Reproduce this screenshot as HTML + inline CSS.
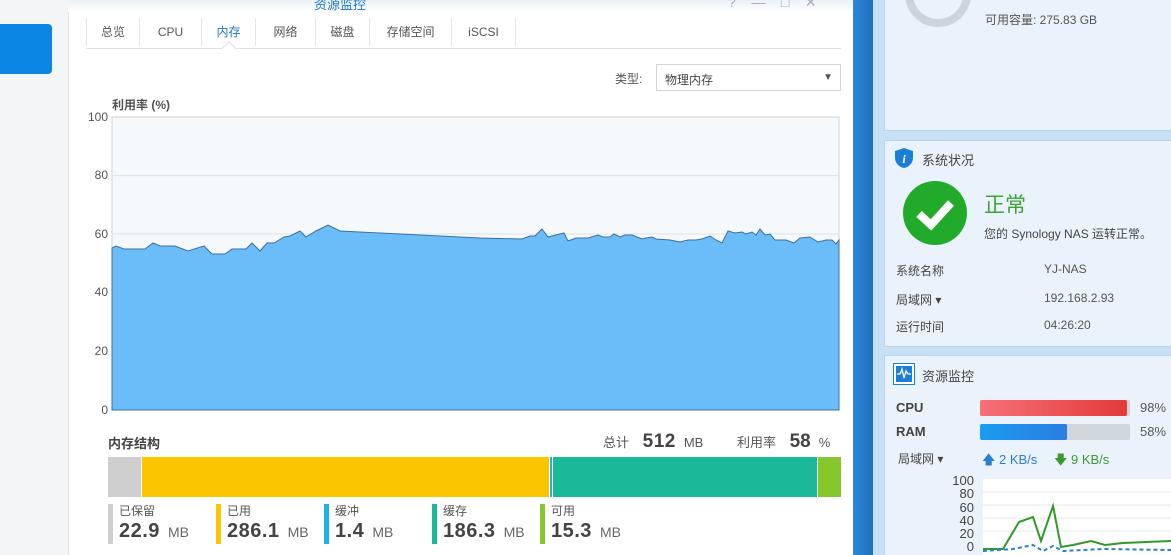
<!DOCTYPE html>
<html style="overflow:hidden;width:1171px;height:555px"><head><meta charset="utf-8"><style>
*{margin:0;padding:0;box-sizing:border-box}
body{width:1171px;height:555px;overflow:hidden;position:relative;background:#fff;font-family:"Liberation Sans","Noto Sans CJK SC",sans-serif;color:#444;font-size:12px}
.a{position:absolute}
.tab{position:absolute;top:18px;height:28px;line-height:28px;font-size:12px;color:#555;text-align:center;border-right:1px solid #e4e8ec}
.yl{position:absolute;right:1063px;font-size:12px;color:#555;text-align:right}
.leg{position:absolute;top:504px;height:40px;border-left:5px solid;padding-left:6px}
.leg .t{font-size:12px;color:#555;line-height:14px}
.leg .v{font-size:20px;font-weight:bold;color:#444;line-height:26px;letter-spacing:0.5px}
.leg .v span{font-size:14px;font-weight:normal;color:#666;margin-left:8px;letter-spacing:0}
.panel{position:absolute;left:884px;width:290px;background:#eaf3fc;border:1px solid #b9d3ea}
.lbl{position:absolute;font-size:12px;color:#444}
</style></head><body>
<div class="a" style="left:0;top:0;width:68px;height:555px;background:#f3f5f7"></div>
<div class="a" style="left:0;top:24px;width:52px;height:50px;background:#0b86e3;border-radius:0 4px 4px 0"></div>
<div class="a" style="left:68px;top:0;width:785px;height:555px;background:#fff;border-left:1px solid #dfe3e7"></div>
<div class="a" style="left:68px;top:0;width:785px;height:12px;background:linear-gradient(#e9f1f8,#fff)"></div>
<div class="a" style="left:314px;top:-6px;font-size:13px;color:#1f78c8">资源监控</div>
<div class="a" style="left:728px;top:-6px;font-size:14px;color:#aab">?&nbsp;&nbsp;&nbsp;&nbsp;—&nbsp;&nbsp;&nbsp;&nbsp;□&nbsp;&nbsp;&nbsp;&nbsp;✕</div>
<div class="tab" style="left:86px;width:54px;border-left:1px solid #e4e8ec">总览</div>
<div class="tab" style="left:140px;width:62px">CPU</div>
<div class="tab" style="left:202px;width:54px;color:#1a79c9">内存</div>
<div class="tab" style="left:256px;width:60px">网络</div>
<div class="tab" style="left:316px;width:54px">磁盘</div>
<div class="tab" style="left:370px;width:82px">存储空间</div>
<div class="tab" style="left:452px;width:64px">iSCSI</div>
<div class="a" style="left:86px;top:48px;width:755px;height:1px;background:#dde2e6"></div>
<div class="a" style="left:224px;top:43px;width:10px;height:10px;background:#fff;border-left:1px solid #dde2e6;border-top:1px solid #dde2e6;transform:rotate(45deg)"></div>
<div class="a" style="left:615px;top:70px;color:#555">类型:</div>
<div class="a" style="left:656px;top:64px;width:185px;height:27px;border:1px solid #cfd6dc;padding:6px 8px;color:#444">物理内存<span style="position:absolute;right:7px;top:7px;font-size:10px;color:#555">▼</span></div>
<div class="a" style="left:112px;top:96px;font-size:12px;font-weight:bold;color:#555">利用率 (%)</div>
<div class="yl" style="top:110px">100</div>
<div class="yl" style="top:168px">80</div>
<div class="yl" style="top:227px">60</div>
<div class="yl" style="top:285px">40</div>
<div class="yl" style="top:344px">20</div>
<div class="yl" style="top:403px">0</div>
<svg class="a" style="left:111px;top:116px" width="730" height="296" viewBox="111 116 730 296">
<rect x="112" y="117" width="727" height="293" fill="#f5f9fc" stroke="#ccd3d9"/>
<g stroke="#dde3e8"><line x1="112" y1="175.6" x2="839" y2="175.6"/><line x1="112" y1="234" x2="839" y2="234"/><line x1="112" y1="292.8" x2="839" y2="292.8"/><line x1="112" y1="351.4" x2="839" y2="351.4"/></g>
<polygon fill="#6bbdf9" stroke="#3e6f99" stroke-width="1" points="112,410 112,248 116,246 124,249 145,249 153,243 160,246 175,246 188,251 204,246 212,254 225,254 232,249 246,249 252,243 260,251 267,243 274,243 284,237 290,236 300,231 306,237 316,231 328,225 340,231 420,235 480,238 522,239 530,236 535,236 542,229 548,237 564,233 568,241 576,238 588,238 598,235 603,237 610,237 614,234 620,237 625,235 632,235 637,237 642,239 646,238 652,237 656,239 670,240 680,242 688,240 696,240 702,239 710,236 716,240 722,243 728,231 735,233 742,232 746,234 752,232 756,235 760,229 765,235 770,234 775,240 786,240 794,243 800,238 810,237 818,242 826,240 832,240 836,244 839,240 839,410"/>
</svg>
<div class="a" style="left:108px;top:433px;font-weight:bold;font-size:13px;color:#444">内存结构</div>
<div class="a" style="left:603px;top:431px;font-size:13px;color:#555;white-space:nowrap">总计 <b style="font-size:19px;color:#444;margin:0 8px 0 10px;letter-spacing:0.5px">512</b>MB <span style="margin-left:30px">利用率</span> <b style="font-size:19px;color:#444;margin:0 8px 0 10px">58</b>%</div>
<div class="a" style="left:108px;top:457px;height:40px;width:733px;display:flex">
<div style="width:33px;background:#cfcfcf"></div><div style="width:1px;background:#fff"></div>
<div style="width:407px;background:#fbc600"></div><div style="width:1px;background:#fff"></div>
<div style="width:2px;background:#1eb2e6"></div><div style="width:1px;background:#fff"></div>
<div style="width:264px;background:#19b99a"></div><div style="width:1px;background:#fff"></div>
<div style="flex:1;background:#86c72e"></div></div>
<div class="leg" style="left:108px;border-color:#cfcfcf"><div class="t">已保留</div><div class="v">22.9<span>MB</span></div></div>
<div class="leg" style="left:216px;border-color:#fbc600"><div class="t">已用</div><div class="v">286.1<span>MB</span></div></div>
<div class="leg" style="left:324px;border-color:#1eb2e6"><div class="t">缓冲</div><div class="v">1.4<span>MB</span></div></div>
<div class="leg" style="left:432px;border-color:#19b99a"><div class="t">缓存</div><div class="v">186.3<span>MB</span></div></div>
<div class="leg" style="left:540px;border-color:#86c72e"><div class="t">可用</div><div class="v">15.3<span>MB</span></div></div>

<div class="a" style="left:853px;top:0;width:20px;height:555px;background:linear-gradient(90deg,#2d86d8,#1f6fc0)"></div>
<div class="a" style="left:873px;top:0;width:298px;height:555px;background:#c8e0f6"></div>
<div class="panel" style="top:-2px;height:133px"></div>
<svg class="a" style="left:900px;top:0" width="80" height="35"><circle cx="38" cy="-6" r="29" fill="none" stroke="#cdd5dc" stroke-width="8"/></svg>
<div class="a" style="left:985px;top:11px;color:#555">可用容量: 275.83 GB</div>
<div class="panel" style="top:140px;height:207px"></div>
<svg class="a" style="left:893px;top:147px" width="22" height="22"><path d="M11 1 L20 4 V11 C20 16 16 20 11 21 C6 20 2 16 2 11 V4 Z" fill="#1a7fd6"/><text x="11" y="16" font-size="12" font-style="italic" font-weight="bold" fill="#fff" text-anchor="middle" font-family="Liberation Serif">i</text></svg>
<div class="a" style="left:922px;top:150px;font-size:13px;color:#444">系统状况</div>
<svg class="a" style="left:903px;top:181px" width="66" height="66"><circle cx="32" cy="32" r="32" fill="#22ab2a"/><path d="M16 33 L28 44 L48 22" fill="none" stroke="#fff" stroke-width="8"/></svg>
<div class="a" style="left:984px;top:189px;font-size:21px;color:#3ca534">正常</div>
<div class="a" style="left:984px;top:225px;color:#444">您的 Synology NAS 运转正常。</div>
<div class="lbl" style="left:896px;top:262px">系统名称</div><div class="lbl" style="left:1044px;top:262px;color:#555">YJ-NAS</div>
<div class="lbl" style="left:896px;top:291px">局域网 ▾</div><div class="lbl" style="left:1044px;top:291px;color:#555">192.168.2.93</div>
<div class="lbl" style="left:896px;top:318px">运行时间</div><div class="lbl" style="left:1044px;top:318px;color:#555">04:26:20</div>
<div class="panel" style="top:355px;height:200px;border-bottom:none"></div>
<svg class="a" style="left:893px;top:363px" width="22" height="22"><rect x="0.5" y="0.5" width="21" height="21" fill="#fff" stroke="#1a7fd6"/><rect x="3" y="3" width="16" height="16" fill="#1a7fd6"/><path d="M4 11 H7 L9 6 L11 15 L13 8 L15 11 H18" fill="none" stroke="#fff" stroke-width="1.3"/></svg>
<div class="a" style="left:922px;top:366px;font-size:13px;color:#444">资源监控</div>
<div class="lbl" style="left:896px;top:400px;font-weight:bold;font-size:13px">CPU</div>
<div class="a" style="left:980px;top:400px;width:150px;height:16px;background:#cfd6dc;border-radius:2px"><div style="width:147px;height:16px;background:linear-gradient(90deg,#f77078,#e33a3a);border-radius:2px"></div></div>
<div class="lbl" style="left:1140px;top:400px;font-size:13px;color:#555">98%</div>
<div class="lbl" style="left:896px;top:424px;font-weight:bold;font-size:13px">RAM</div>
<div class="a" style="left:980px;top:424px;width:150px;height:16px;background:#cfd6dc;border-radius:2px"><div style="width:87px;height:16px;background:linear-gradient(90deg,#1a9cf0,#2a7ee0);border-radius:2px"></div></div>
<div class="lbl" style="left:1140px;top:424px;font-size:13px;color:#555">58%</div>
<div class="lbl" style="left:898px;top:450px">局域网 ▾</div>
<div class="lbl" style="left:982px;top:451px;color:#2a7fd0;font-size:13px">🡅 2 KB/s</div>
<div class="lbl" style="left:1054px;top:451px;color:#3a9a30;font-size:13px">🡇 9 KB/s</div>
<div class="a" style="left:940px;top:474px;width:34px;text-align:right;font-size:13px;line-height:13.3px;color:#444">100<br>80<br>60<br>40<br>20<br>0</div>
<svg class="a" style="left:983px;top:479px" width="188" height="76"><rect width="188" height="76" fill="#fff"/><g stroke="#e6e9ec"><line x1="0" y1="13" x2="188" y2="13"/><line x1="0" y1="26" x2="188" y2="26"/><line x1="0" y1="39" x2="188" y2="39"/><line x1="0" y1="52" x2="188" y2="52"/></g><polyline points="0,70 20,70 36,43 50,38 58,62 70,27 78,68 90,66 108,62 122,66 140,64 188,62" fill="none" stroke="#2f9a2a" stroke-width="2"/><polyline points="0,72 30,70 50,66 60,72 70,67 80,72 120,70 188,71" fill="none" stroke="#2a7fd0" stroke-width="2" stroke-dasharray="4 3"/></svg>
</body></html>
